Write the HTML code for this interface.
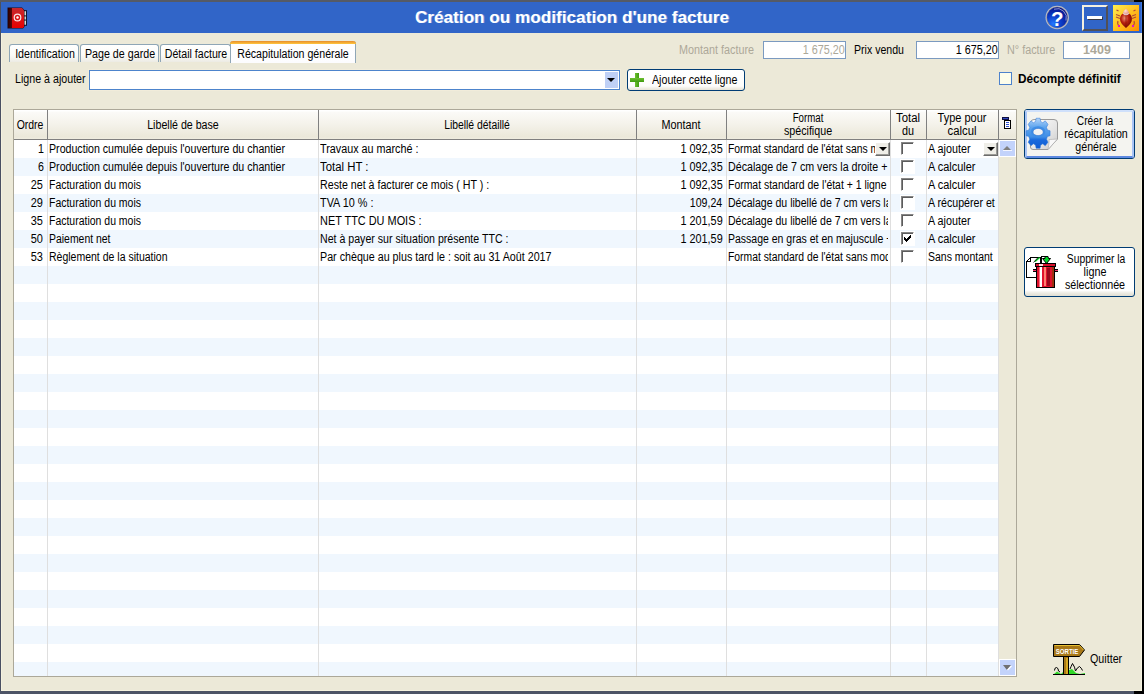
<!DOCTYPE html>
<html><head><meta charset="utf-8"><title>Création ou modification d'une facture</title>
<style>
html,body{margin:0;padding:0;}
body{width:1144px;height:694px;overflow:hidden;background:#000;position:relative;font-family:"Liberation Sans",sans-serif;font-size:12.5px;color:#000;}
.abs{position:absolute;}
.t{position:absolute;white-space:nowrap;line-height:14px;font-size:12.5px;transform:scaleX(0.845);transform-origin:0 0;}
.r{transform-origin:100% 0;text-align:right;}
.c{transform-origin:50% 0;text-align:center;}
.b{font-weight:bold;}
.g{color:#aca899;}
.tab{position:absolute;top:44px;height:18px;border:1px solid #8fa6b6;border-bottom:none;border-radius:3px 3px 0 0;background:linear-gradient(#ffffff,#fbfbf8 60%,#ecebe4);box-sizing:border-box;}
.fld{position:absolute;box-sizing:border-box;border:1px solid #7b9ac0;background:#fff;height:18px;top:41px;}
.btn{position:absolute;box-sizing:border-box;border:1px solid #003c74;border-radius:3px;background:linear-gradient(#ffffff,#fdfdfb 80%,#e6e3d6);}
.hs{position:absolute;top:110px;width:1px;height:29px;background:#808080;}
.vs{position:absolute;top:140px;width:1px;height:536px;background:#dfdfdf;}
.row{position:absolute;left:14px;width:984px;height:18px;background:#f0f7fe;}
.cb{position:absolute;width:13px;height:13px;box-sizing:border-box;background:#fff;border-top:1px solid #868686;border-left:1px solid #868686;border-right:1px solid #fff;border-bottom:1px solid #fff;box-shadow:0 0 0 1px #fff;}
.cb:before{content:"";position:absolute;left:0;top:0;width:10px;height:10px;border-top:1px solid #5c5c5c;border-left:1px solid #5c5c5c;}
.mb{position:absolute;width:15px;height:14px;box-sizing:border-box;background:#efeee8;border-top:1px solid #fff;border-left:1px solid #fff;border-right:1px solid #6c6c6c;border-bottom:1px solid #6c6c6c;}
.mb:before{content:"";position:absolute;right:0;bottom:0;width:12px;height:11px;border-right:1px solid #9a9a96;border-bottom:1px solid #9a9a96;}
.mb:after{content:"";position:absolute;left:3px;top:4px;border-left:4px solid transparent;border-right:4px solid transparent;border-top:4px solid #000;}
</style></head><body>

<div class="abs" style="left:0;top:0;width:1134px;height:2px;background:#555a66"></div>
<div class="abs" style="left:0;top:2px;width:1px;height:692px;background:#4a5062"></div>
<div class="abs" style="left:0;top:691px;width:1134px;height:3px;background:#4d5466"></div>
<div class="abs" style="left:1px;top:2px;width:1141px;height:31px;background:#3165c8"></div>
<div class="abs" style="left:1px;top:33px;width:1141px;height:658px;background:#ece9d8"></div>
<div class="abs" style="left:1px;top:33px;width:1px;height:658px;background:#f5f2df"></div>
<div class="abs" style="left:1141px;top:33px;width:1px;height:658px;background:#f6f3e0"></div>
<div class="abs" style="left:1px;top:690px;width:1141px;height:1px;background:#f6f3e0"></div>
<div class="abs" style="left:1141px;top:2px;width:1px;height:31px;background:#3f78e0"></div>
<div class="abs b" style="left:0;top:2px;width:1144px;height:31px;line-height:32px;text-align:center;color:#fff;font-size:17px;letter-spacing:0.08px;text-shadow:1px 0 0 rgba(255,255,255,.35)">Création ou modification d'une facture</div>
<svg class="abs" style="left:6px;top:6px" width="24" height="25" viewBox="0 0 24 24" preserveAspectRatio="none">
<defs><linearGradient id="ab" x1="0" y1="0" x2="0" y2="1"><stop offset="0" stop-color="#c8282c"/><stop offset="1" stop-color="#e80000"/></linearGradient>
<linearGradient id="sp" x1="0" y1="0" x2="1" y2="0"><stop offset="0" stop-color="#2a0000"/><stop offset="1" stop-color="#5a0808"/></linearGradient></defs>
<rect x="18" y="4" width="3" height="15" fill="#101830"/>
<rect x="18" y="5" width="2" height="4" fill="#d8d8d8"/><rect x="18" y="10" width="2" height="3" fill="#d0d0d0"/><rect x="18" y="14" width="2" height="4" fill="#d8d8d8"/>
<path d="M1.5 1.5 H16 L18.5 4 V20 L17 21.5 H1.5 Z" fill="#1a0a18"/>
<rect x="2" y="2" width="4" height="19" fill="url(#sp)"/>
<path d="M6 2 H16 L18 4 V20 L17 21 H6 Z" fill="url(#ab)"/>
<circle cx="11.5" cy="11" r="3.3" fill="none" stroke="#fff" stroke-width="1.2" opacity=".9"/>
<circle cx="11.5" cy="11" r="1.2" fill="#fff"/>
</svg>
<svg class="abs" style="left:1045px;top:5px" width="25" height="25" viewBox="0 0 25 25">
<defs><radialGradient id="hg" cx="0.3" cy="0.8" r="0.9"><stop offset="0" stop-color="#2478ff"/><stop offset="0.4" stop-color="#0c40cc"/><stop offset="1" stop-color="#060c80"/></radialGradient></defs>
<circle cx="12.2" cy="12.5" r="11.7" fill="#bcbec8"/><circle cx="12.2" cy="12.5" r="10.7" fill="#7a7f94"/>
<circle cx="12.2" cy="12.5" r="10.2" fill="url(#hg)"/>
<path d="M9 4.2 A9.2 9.2 0 0 1 21 15.5" fill="none" stroke="#fff" stroke-width="0.9" opacity=".6"/>
<text x="12.3" y="21.2" font-family="Liberation Sans" font-weight="bold" font-size="20.5" fill="#fff" text-anchor="middle">?</text>
</svg>
<div class="abs" style="left:1082px;top:5px;width:26px;height:26px;box-sizing:border-box;border-top:2px solid #f4f0e0;border-left:2px solid #f4f0e0;border-right:2px solid #505058;border-bottom:2px solid #505058;background:#3165c8"></div>
<div class="abs" style="left:1087px;top:16px;width:15px;height:3px;background:#fff;box-shadow:1px 1px 0 #3a3a44"></div>
<svg class="abs" style="left:1113px;top:5px" width="26" height="26" viewBox="0 0 26 26">
<defs><linearGradient id="bg1" x1="0" y1="0" x2="1" y2="1"><stop offset="0" stop-color="#ffee50"/><stop offset="0.5" stop-color="#ffc020"/><stop offset="1" stop-color="#ff8c00"/></linearGradient>
<radialGradient id="bb" cx="0.4" cy="0.35" r="0.7"><stop offset="0" stop-color="#f09070"/><stop offset="0.45" stop-color="#b82010"/><stop offset="1" stop-color="#6a0400"/></radialGradient>
<radialGradient id="bh" cx="0.4" cy="0.4" r="0.7"><stop offset="0" stop-color="#ffe0d8"/><stop offset="1" stop-color="#e08878"/></radialGradient></defs>
<rect width="26" height="26" fill="url(#bg1)"/>
<path d="M13 8 C17.5 7.5 20 12 18.5 16.5 C17.5 19.5 14.5 21.5 13 23 C11.5 21.5 8.5 19.5 7.5 16.5 C6 12 8.5 7.5 13 8Z" fill="url(#bb)"/>
<path d="M13 3.500 L16 7 L15 9.500 H11 L10 7Z" fill="url(#bh)"/>
<path d="M10 8.500 Q13 11.500 16 8.500" fill="none" stroke="#e8e0e8" stroke-width="1"/>
<path d="M13 10 V22" stroke="#8a1008" stroke-width="0.7"/>
<g stroke="#b04838" stroke-width="1.100" fill="none"><path d="M7 11 L3 9.500"/><path d="M19 11 L23 9.500"/><path d="M7 13.500 L3 12"/><path d="M19 13.500 L23 12"/><path d="M5 16 Q4 19 6 21"/><path d="M21 16 Q22 19 20 21"/><path d="M3.500 5 L5.500 6"/><path d="M22.500 5 L20.500 6"/></g>
<rect x="5" y="20" width="2" height="2" fill="#e010d0"/><rect x="19" y="20" width="2" height="2" fill="#e010d0"/>
</svg>
<div class="tab" style="left:9px;width:70px"></div>
<div class="t c" style="top:46.67px;transform:scaleX(0.8506);left:-155.40px;width:400px;">Identification</div>
<div class="tab" style="left:80px;width:79px"></div>
<div class="t c" style="top:46.67px;transform:scaleX(0.8559);left:-80.40px;width:400px;">Page de garde</div>
<div class="tab" style="left:160px;width:71px"></div>
<div class="t c" style="top:46.67px;transform:scaleX(0.8485);left:-3.90px;width:400px;">Détail facture</div>
<div class="tab" style="left:230px;top:41px;width:126px;height:22px;background:linear-gradient(#ffffff,#fcfcfe);border-color:#8fa6b6;border-top:none"><div style="position:absolute;left:-1px;right:-1px;top:0;height:3px;background:linear-gradient(#e68b2c,#ffc73c);border-radius:3px 3px 0 0"></div></div>
<div class="t c" style="top:46.67px;transform:scaleX(0.8489);left:92.80px;width:400px;">Récapitulation générale</div>
<div class="t" style="top:42.67px;transform:scaleX(0.8635);color:#aca899;left:678.90px;">Montant facture</div>
<div class="fld" style="left:763px;width:83px;background:#fff"></div>
<div class="t r" style="top:42.67px;transform:scaleX(0.8629);color:#aca899;right:299.80px;">1 675,20</div>
<div class="t" style="top:42.67px;transform:scaleX(0.8466);left:853.70px;">Prix vendu</div>
<div class="fld" style="left:916px;width:83px"></div>
<div class="t r" style="top:42.67px;transform:scaleX(0.8629);right:146.80px;">1 675,20</div>
<div class="t" style="top:42.67px;transform:scaleX(0.8651);color:#aca899;left:1006.90px;">N° facture</div>
<div class="fld" style="left:1063px;width:67px"></div>
<div class="t c" style="top:42.67px;transform:scaleX(0.9996);font-weight:bold;color:#aca899;left:897.40px;width:400px;">1409</div>
<div class="t" style="top:71.67px;transform:scaleX(0.8537);left:14.90px;">Ligne à ajouter</div>
<div class="abs" style="left:89px;top:70px;width:531px;height:20px;box-sizing:border-box;border:1px solid #4d84cc;background:#fff;box-shadow:0 0 0 1px #f1ecda"></div>
<div class="abs" style="left:605px;top:72px;width:13px;height:16px;background:#bfd0f6"></div>
<div class="abs" style="left:607px;top:78px;border-left:4px solid transparent;border-right:4px solid transparent;border-top:4px solid #000"></div>
<div class="btn" style="left:627px;top:69px;width:118px;height:22px"></div>
<div class="abs" style="left:635px;top:73px;width:4px;height:14px;background:linear-gradient(90deg,#6cc030,#3f9a10)"></div>
<div class="abs" style="left:630px;top:78px;width:14px;height:4px;background:linear-gradient(#6cc030,#3f9a10)"></div>
<div class="t" style="top:72.67px;transform:scaleX(0.8535);left:651.50px;">Ajouter cette ligne</div>
<div class="abs" style="left:999px;top:72px;width:13px;height:13px;box-sizing:border-box;border:1px solid #4d82cc;background:#fdfdea"></div>
<div class="t" style="top:71.67px;transform:scaleX(0.9427);font-weight:bold;left:1018.00px;">Décompte définitif</div>
<div class="abs" style="left:13px;top:109px;width:1004px;height:568px;box-sizing:border-box;border:1px solid #aca899;background:#fff"></div>
<div class="abs" style="left:14px;top:110px;width:1002px;height:29px;background:linear-gradient(#ffffff 0,#ffffff 3%,#fbfaf7 8%,#f4f2ea 50%,#ebe8da 92%,#efecdf 100%)"></div>
<div class="abs" style="left:14px;top:139px;width:1002px;height:1px;background:#808080"></div>
<div class="abs" style="left:999px;top:140px;width:17px;height:536px;background:#ece9d8"></div>
<div class="row" style="top:158px;height:18px"></div>
<div class="row" style="top:194px;height:18px"></div>
<div class="row" style="top:230px;height:18px"></div>
<div class="row" style="top:266px;height:18px"></div>
<div class="row" style="top:302px;height:18px"></div>
<div class="row" style="top:338px;height:18px"></div>
<div class="row" style="top:374px;height:18px"></div>
<div class="row" style="top:410px;height:18px"></div>
<div class="row" style="top:446px;height:18px"></div>
<div class="row" style="top:482px;height:18px"></div>
<div class="row" style="top:518px;height:18px"></div>
<div class="row" style="top:554px;height:18px"></div>
<div class="row" style="top:590px;height:18px"></div>
<div class="row" style="top:626px;height:18px"></div>
<div class="row" style="top:662px;height:14px"></div>
<div class="hs" style="left:47px"></div>
<div class="vs" style="left:47px"></div>
<div class="hs" style="left:318px"></div>
<div class="vs" style="left:318px"></div>
<div class="hs" style="left:636px"></div>
<div class="vs" style="left:636px"></div>
<div class="hs" style="left:726px"></div>
<div class="vs" style="left:726px"></div>
<div class="hs" style="left:890px"></div>
<div class="vs" style="left:890px"></div>
<div class="hs" style="left:926px"></div>
<div class="vs" style="left:926px"></div>
<div class="hs" style="left:998px"></div>
<div class="vs" style="left:998px"></div>
<div class="t c" style="top:117.67px;transform:scaleX(0.8356);left:-170.50px;width:400px;">Ordre</div>
<div class="t c" style="top:117.67px;transform:scaleX(0.8513);left:-17.50px;width:400px;">Libellé de base</div>
<div class="t c" style="top:117.67px;transform:scaleX(0.8292);left:277.00px;width:400px;">Libellé détaillé</div>
<div class="t c" style="top:117.67px;transform:scaleX(0.8656);left:481.00px;width:400px;">Montant</div>
<div class="t c" style="top:110.67px;transform:scaleX(0.7754);left:607.70px;width:400px;">Format</div>
<div class="t c" style="top:123.67px;transform:scaleX(0.8562);left:607.70px;width:400px;">spécifique</div>
<div class="t c" style="top:110.67px;transform:scaleX(0.9089);left:707.70px;width:400px;">Total</div>
<div class="t c" style="top:123.67px;transform:scaleX(0.8629);left:707.70px;width:400px;">du</div>
<div class="t c" style="top:110.67px;transform:scaleX(0.8778);left:761.70px;width:400px;">Type pour</div>
<div class="t c" style="top:123.67px;transform:scaleX(0.9040);left:761.70px;width:400px;">calcul</div>
<svg class="abs" style="left:1001px;top:116px" width="12" height="14" viewBox="0 0 12 14">
<rect x="1.500" y="1.500" width="6" height="2" fill="#3048c0" stroke="#101040" stroke-width="1"/>
<rect x="3.500" y="4.500" width="6" height="8" fill="#fff" stroke="#000" stroke-width="1"/>
<path d="M5 6.500H8M5 8.500H8M5 10.500H8" stroke="#3050d0" stroke-width="1"/>
</svg>
<div class="t r" style="top:141.67px;transform:scaleX(0.8510);right:1099.90px;">1</div>
<div class="t" style="top:141.67px;transform:scaleX(0.8503);left:49.00px;">Production cumulée depuis l'ouverture du chantier</div>
<div class="t" style="top:141.67px;transform:scaleX(0.8627);left:319.75px;">Travaux au marché :</div>
<div class="t r" style="top:141.67px;transform:scaleX(0.8670);right:421.80px;">1 092,35</div>
<div class="abs" style="left:0;top:140px;width:876px;height:18px;overflow:hidden"><div class="abs" style="left:0;top:-140px">
<div class="t" style="top:141.67px;transform:scaleX(0.8289);left:728.00px;">Format standard de l'état sans modification</div>
</div></div>
<div class="cb" style="left:901px;top:142px"></div>
<div class="t" style="top:141.67px;transform:scaleX(0.8613);left:927.75px;">A ajouter</div>
<div class="t r" style="top:159.67px;transform:scaleX(0.8510);right:1099.90px;">6</div>
<div class="t" style="top:159.67px;transform:scaleX(0.8503);left:49.00px;">Production cumulée depuis l'ouverture du chantier</div>
<div class="t" style="top:159.67px;transform:scaleX(0.9105);left:319.75px;">Total HT :</div>
<div class="t r" style="top:159.67px;transform:scaleX(0.8670);right:421.80px;">1 092,35</div>
<div class="abs" style="left:0;top:158px;width:888px;height:18px;overflow:hidden"><div class="abs" style="left:0;top:-158px">
<div class="t" style="top:159.67px;transform:scaleX(0.8549);left:728.00px;">Décalage de 7 cm vers la droite + 1 ligne</div>
</div></div>
<div class="cb" style="left:901px;top:160px"></div>
<div class="t" style="top:159.67px;transform:scaleX(0.8763);left:927.75px;">A calculer</div>
<div class="t r" style="top:177.67px;transform:scaleX(0.8773);right:1100.80px;">25</div>
<div class="t" style="top:177.67px;transform:scaleX(0.8380);left:49.00px;">Facturation du mois</div>
<div class="t" style="top:177.67px;transform:scaleX(0.8528);left:319.75px;">Reste net à facturer ce mois ( HT ) :</div>
<div class="t r" style="top:177.67px;transform:scaleX(0.8670);right:421.80px;">1 092,35</div>
<div class="abs" style="left:0;top:176px;width:888px;height:18px;overflow:hidden"><div class="abs" style="left:0;top:-176px">
<div class="t" style="top:177.67px;transform:scaleX(0.8357);left:728.00px;">Format standard de l'état + 1 ligne avant</div>
</div></div>
<div class="cb" style="left:901px;top:178px"></div>
<div class="t" style="top:177.67px;transform:scaleX(0.8763);left:927.75px;">A calculer</div>
<div class="t r" style="top:195.67px;transform:scaleX(0.8773);right:1100.80px;">29</div>
<div class="t" style="top:195.67px;transform:scaleX(0.8380);left:49.00px;">Facturation du mois</div>
<div class="t" style="top:195.67px;transform:scaleX(0.8684);left:319.75px;">TVA 10 % :</div>
<div class="t r" style="top:195.67px;transform:scaleX(0.8474);right:421.80px;">109,24</div>
<div class="abs" style="left:0;top:194px;width:888px;height:18px;overflow:hidden"><div class="abs" style="left:0;top:-194px">
<div class="t" style="top:195.67px;transform:scaleX(0.8437);left:728.00px;">Décalage du libellé de 7 cm vers la droite</div>
</div></div>
<div class="cb" style="left:901px;top:196px"></div>
<div class="t" style="top:195.67px;transform:scaleX(0.8501);left:927.75px;">A récupérer et</div>
<div class="t r" style="top:213.67px;transform:scaleX(0.8773);right:1100.80px;">35</div>
<div class="t" style="top:213.67px;transform:scaleX(0.8380);left:49.00px;">Facturation du mois</div>
<div class="t" style="top:213.67px;transform:scaleX(0.8734);left:319.75px;">NET TTC DU MOIS :</div>
<div class="t r" style="top:213.67px;transform:scaleX(0.8670);right:421.80px;">1 201,59</div>
<div class="abs" style="left:0;top:212px;width:888px;height:18px;overflow:hidden"><div class="abs" style="left:0;top:-212px">
<div class="t" style="top:213.67px;transform:scaleX(0.8437);left:728.00px;">Décalage du libellé de 7 cm vers la droite</div>
</div></div>
<div class="cb" style="left:901px;top:214px"></div>
<div class="t" style="top:213.67px;transform:scaleX(0.8613);left:927.75px;">A ajouter</div>
<div class="t r" style="top:231.67px;transform:scaleX(0.8773);right:1100.80px;">50</div>
<div class="t" style="top:231.67px;transform:scaleX(0.8348);left:49.00px;">Paiement net</div>
<div class="t" style="top:231.67px;transform:scaleX(0.8487);left:319.75px;">Net à payer sur situation présente TTC :</div>
<div class="t r" style="top:231.67px;transform:scaleX(0.8670);right:421.80px;">1 201,59</div>
<div class="abs" style="left:0;top:230px;width:888px;height:18px;overflow:hidden"><div class="abs" style="left:0;top:-230px">
<div class="t" style="top:231.67px;transform:scaleX(0.8399);left:728.00px;">Passage en gras et en majuscule + 1 ligne</div>
</div></div>
<div class="cb" style="left:901px;top:232px"></div>
<svg class="abs" style="left:904px;top:235px" width="7" height="7" viewBox="0 0 7 7" shape-rendering="crispEdges"><path d="M0 2h1v3h-1zM1 3h1v3h-1zM2 4h1v3h-1zM3 3h1v3h-1zM4 2h1v3h-1zM5 1h1v3h-1zM6 0h1v3h-1z" fill="#000"/></svg>
<div class="t" style="top:231.67px;transform:scaleX(0.8763);left:927.75px;">A calculer</div>
<div class="t r" style="top:249.67px;transform:scaleX(0.8773);right:1100.80px;">53</div>
<div class="t" style="top:249.67px;transform:scaleX(0.8401);left:49.00px;">Règlement de la situation</div>
<div class="t" style="top:249.67px;transform:scaleX(0.8563);left:319.75px;">Par chèque au plus tard le : soit au 31 Août 2017</div>
<div class="abs" style="left:0;top:248px;width:888px;height:18px;overflow:hidden"><div class="abs" style="left:0;top:-248px">
<div class="t" style="top:249.67px;transform:scaleX(0.8289);left:728.00px;">Format standard de l'état sans modification</div>
</div></div>
<div class="cb" style="left:901px;top:250px"></div>
<div class="t" style="top:249.67px;transform:scaleX(0.8394);left:927.75px;">Sans montant</div>
<div class="mb" style="left:875px;top:142px"></div>
<div class="mb" style="left:983px;top:142px"></div>
<div class="abs" style="left:999px;top:140px;width:17px;height:17px;background:#fff"></div>
<div class="abs" style="left:1000px;top:141px;width:15px;height:15px;background:#c3d3fb"></div>
<div class="abs" style="left:1003px;top:146px;border-left:4.500px solid transparent;border-right:4.500px solid transparent;border-bottom:4px solid #808080"></div>
<div class="abs" style="left:1003px;top:150px;width:9px;height:1px;background:#f4f6ff"></div>
<div class="abs" style="left:999px;top:659px;width:17px;height:17px;background:#fff"></div>
<div class="abs" style="left:1000px;top:660px;width:15px;height:15px;background:#c3d3fb"></div>
<div class="abs" style="left:1003px;top:665px;border-left:4.500px solid transparent;border-right:4.500px solid transparent;border-top:5px solid #707070"></div>
<svg class="abs" style="left:1006px;top:665px" width="6" height="6"><path d="M1.500 5 L5.500 1" stroke="#fff" stroke-width="1.200"/></svg>
<div class="btn" style="left:1024px;top:109px;width:111px;height:50px;background:#f4f4f0"></div>
<div class="abs" style="left:1025px;top:110px;width:109px;height:48px;box-sizing:border-box;border:2px solid #a9c4f5;border-top-color:#cfe0fb;border-bottom-color:#5d89e0;border-radius:2px;"></div>
<div class="t c" style="top:113.67px;transform:scaleX(0.8186);left:895.40px;width:400px;">Créer la</div>
<div class="t c" style="top:126.67px;transform:scaleX(0.8553);left:896.00px;width:400px;">récapitulation</div>
<div class="t c" style="top:139.67px;transform:scaleX(0.8488);left:896.00px;width:400px;">générale</div>
<svg class="abs" style="left:1024px;top:116px" width="36" height="36" viewBox="0 0 36 36">
<defs><linearGradient id="pg" x1="0" y1="0" x2="1" y2="1"><stop offset="0" stop-color="#ffffff"/><stop offset="0.6" stop-color="#e4e4e4"/><stop offset="1" stop-color="#c8c8c8"/></linearGradient>
<linearGradient id="gg" x1="0" y1="0" x2="0" y2="1"><stop offset="0" stop-color="#b4d6fa"/><stop offset="0.3" stop-color="#5ea4ee"/><stop offset="0.62" stop-color="#3f8ee6"/><stop offset="0.72" stop-color="#1a6adc"/><stop offset="1" stop-color="#0f5cd4"/></linearGradient></defs>
<path d="M11 3.500 H30 Q33.500 3.500 33.500 7 V23 L24 33.500 H9 Q6.500 33.500 6.500 31 V7 Q6.500 3.500 11 3.500Z" fill="url(#pg)" stroke="#9a9a9a" stroke-width="1"/>
<path d="M33.500 23 L24 33.500 Q25.500 25 25 23.500 Q28 23.500 33.500 23Z" fill="#f8f8f8" stroke="#aaa" stroke-width="0.6"/>
<g transform="translate(14.1,15.8)">
<path d="M-2.200,-12 h4.400 l0.700,3 a8.500,8.500 0 0 1 2.300,1 l2.700,-1.700 l3.100,3.100 l-1.700,2.700 a8.500,8.500 0 0 1 1,2.300 l3,0.700 v4.400 l-3,0.700 a8.500,8.500 0 0 1 -1,2.300 l1.700,2.700 l-3.100,3.100 l-2.700,-1.700 a8.500,8.500 0 0 1 -2.300,1 l-0.700,3 h-4.400 l-0.700,-3 a8.500,8.500 0 0 1 -2.300,-1 l-2.700,1.700 l-3.100,-3.100 l1.700,-2.700 a8.500,8.500 0 0 1 -1,-2.300 l-3,-0.700 v-4.400 l3,-0.700 a8.500,8.500 0 0 1 1,-2.300 l-1.700,-2.700 l3.100,-3.100 l2.700,1.700 a8.500,8.500 0 0 1 2.300,-1 z" fill="url(#gg)" stroke="#2a74d8" stroke-width="0.5" stroke-linejoin="round" transform="scale(0.9,1.13)"/>
<ellipse cx="0" cy="0" rx="7.2" ry="5.6" fill="#3f8ee6"/>
<ellipse cx="0" cy="0.2" rx="5.1" ry="3.6" fill="#f2f2f2" stroke="#2a6ccc" stroke-width="0.5"/>
</g>
</svg>
<div class="btn" style="left:1024px;top:247px;width:111px;height:50px;background:linear-gradient(#ffffff,#ffffff 88%,#ecebe3 94%,#e0ded2)"></div>
<div class="t c" style="top:251.67px;transform:scaleX(0.8240);left:895.60px;width:400px;">Supprimer la</div>
<div class="t c" style="top:264.67px;transform:scaleX(0.8629);left:895.10px;width:400px;">ligne</div>
<div class="t c" style="top:277.67px;transform:scaleX(0.8575);left:895.40px;width:400px;">sélectionnée</div>
<svg class="abs" style="left:1022px;top:252px" width="40" height="40" viewBox="0 0 40 40" shape-rendering="crispEdges">
<path d="M4.500 9.500 L8.500 5.500 H18.500 V25.500 H4.500Z" fill="#fff" stroke="#000" stroke-width="1"/>
<path d="M4.500 9.500 H8.500 V5.500" fill="none" stroke="#000" stroke-width="1"/>
<path d="M18.5 4.5 H24.5 M19.5 4.5 V11" fill="none" stroke="#000" stroke-width="1"/>
<path d="M23 4.5 H26 L26.5 6.5 H28.5 L24.5 11.5 L20.5 6.5 H23Z" fill="#00d828" stroke="#000" stroke-width="1" shape-rendering="auto"/>
<path d="M13 9.5 L17.5 5.5" stroke="#00d020" stroke-width="1.6" shape-rendering="auto"/>
<path d="M11.5 10.5 L16.5 5" stroke="#000" stroke-width="0.8" shape-rendering="auto"/>
<rect x="11" y="17" width="4" height="3" fill="#000"/><rect x="11" y="18" width="3" height="1" fill="#e8386c"/>
<rect x="32" y="17" width="4" height="3" fill="#000"/><rect x="33" y="18" width="3" height="1" fill="#e8386c"/>
<rect x="14.500" y="14.500" width="18" height="21" fill="#e0102c" stroke="#000" stroke-width="1"/>
<rect x="18" y="15" width="2" height="20" fill="#fff"/>
<rect x="17" y="15" width="1" height="20" fill="#ff7080"/>
<rect x="22" y="15" width="2" height="19" fill="#ff8070"/>
<rect x="25" y="16" width="3" height="18" fill="#98081c"/>
<rect x="30" y="15" width="2" height="20" fill="#a03010"/>
<rect x="13.500" y="11.500" width="20" height="3" fill="#d8102c" stroke="#000" stroke-width="1"/>
<rect x="17" y="12" width="4" height="2" fill="#ffd8d8"/>
</svg>
<svg class="abs" style="left:1052px;top:643px" width="35" height="34" viewBox="0 0 35 34" shape-rendering="crispEdges">
<rect x="11.500" y="13.500" width="5" height="18" fill="#a87818" stroke="#000" stroke-width="1"/>
<rect x="14" y="15" width="2" height="16" fill="#d8a820"/>
<path d="M1.500 1.500 H27.500 L32.500 7 L27.500 13.500 H1.500Z" fill="#a87818" stroke="#000" stroke-width="1" shape-rendering="auto"/>
<path d="M2.500 2.500 H27.500 L31.500 7" fill="none" stroke="#e8c030" stroke-width="1" shape-rendering="auto"/>
<text x="3.800" y="10.800" font-family="Liberation Sans" font-weight="bold" font-size="7.6" fill="#fff" textLength="22.5" lengthAdjust="spacingAndGlyphs" shape-rendering="auto">SORTiE</text>
<path d="M1 31.500 H33" stroke="#000" stroke-width="1"/>
<path d="M2 31 L5 28.500 L9 31 L11 29 V31Z M17 31 V27 L20 26 L24 30 L28 31 L33 30 V31Z" fill="#30d828" shape-rendering="auto"/>
<path d="M2.500 27.500 Q2.500 24.500 4.500 24.500 Q6.500 25 6.500 28 L8 29 M18 26 Q19 23.500 20.500 20.500 Q23 24 23.500 28 Q25 24.500 27.500 23.500 Q29.500 25 30.500 27.500" fill="none" stroke="#000" stroke-width="1" shape-rendering="auto"/>
</svg>
<div class="t" style="top:651.67px;transform:scaleX(0.8583);left:1090.30px;">Quitter</div>
</body></html>
